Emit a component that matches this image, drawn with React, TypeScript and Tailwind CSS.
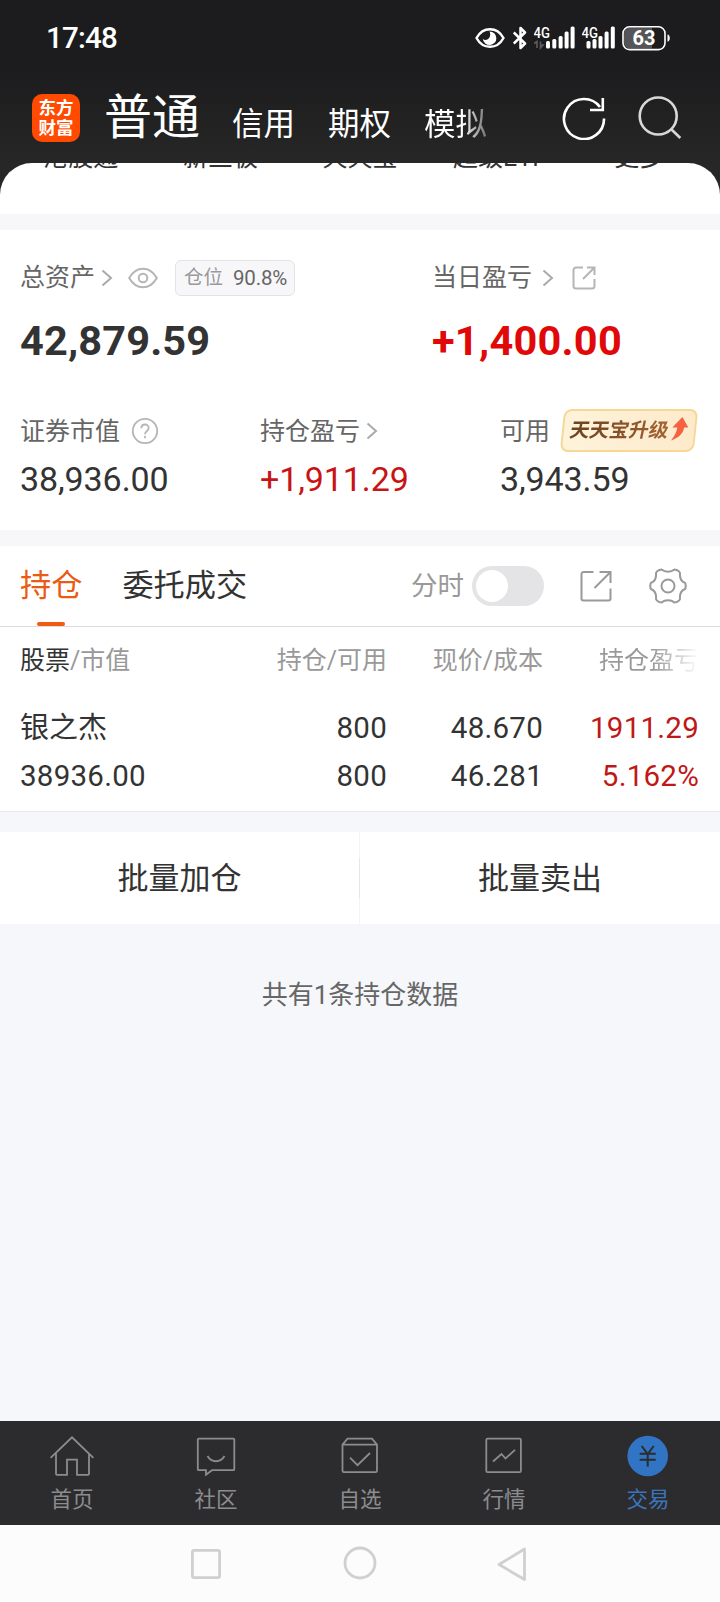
import { ReactNode } from "react";
import clsx from "clsx";

const shortcuts = ["港股通", "新三板", "天天宝", "超级ETF", "更多"];
const accountTabs = ["信用", "期权", "模拟"];

const EyeStatusIcon = () => (
  <svg className="w-[30px] h-[22px]" viewBox="0 0 30 22" fill="none">
    <path d="M1.500 11C5 4.600 9.600 2.200 15 2.200s10 2.400 13.500 8.800C25 17.400 20.400 19.800 15 19.800S5 17.400 1.500 11Z" stroke="#fff" strokeWidth="2.400" />
    <path d="M14.500 4.500a6.800 6.800 0 1 1-6.700 7.500c1.500 1.200 3.500 1.200 5 .2 2.600-1.700 3-5 1.700-7.700Z" fill="#fff" />
  </svg>
);

const BluetoothIcon = () => (
  <svg className="w-[14px] h-[24px]" viewBox="0 0 14 24" fill="none" stroke="#fff" strokeWidth="2.500" strokeLinejoin="round">
    <path d="M.8 6.500 12 17.500l-4.500 4.500V2L12 6.500.8 17.500" />
  </svg>
);

const SignalIcon = ({ bars, data }: { bars: number[]; data?: boolean }) => (
  <svg className="w-[42px] h-[24px]" viewBox="0 0 42 24">
    <text x="-.5" y="11.500" fill="#fff" fontSize="15" fontWeight="500" fontFamily="Roboto, sans-serif" textLength="16.500" lengthAdjust="spacingAndGlyphs">4G</text>
    {data && <path d="M0 17.500 3 15.500V22M6.500 15.500V22L9 19H6.500" stroke="#5c5c5e" strokeWidth="1.600" fill="none" />}
    {bars.map((x, i) => (
      <rect key={x} x={x} y={[15, 13, 10, 5.5, 0.5][i]} width="4" height={[7.500, 9.500, 12.500, 17, 22][i]} rx="1.500" fill="#fff" />
    ))}
  </svg>
);

const BatteryIcon = () => (
  <svg className="w-[50px] h-[26px]" viewBox="0 0 50 26">
    <path d="M9 2.500h22v21H9a6 6 0 0 1-6-6v-9a6 6 0 0 1 6-6Z" fill="#555557" />
    <rect x="2" y="1.800" width="42" height="22.800" rx="6.500" fill="none" stroke="#fff" strokeWidth="1.600" />
    <path d="M46.500 9.500c3 .2 3 7 0 7.200Z" fill="#fff" />
    <text x="23" y="20.200" textAnchor="middle" fill="#fff" fontSize="20" fontWeight="700" fontFamily="Roboto, sans-serif">63</text>
  </svg>
);

const Chevron = ({ className }: { className?: string }) => (
  <svg className={clsx("w-[12px] h-[18px] shrink-0", className)} viewBox="0 0 12 18" fill="none" stroke="#aaa" strokeWidth="2">
    <path d="M1.500 1.500 10 9l-8.500 7.500" />
  </svg>
);

const EyeIcon = () => (
  <svg className="w-[30px] h-[22px] shrink-0" viewBox="0 0 30 22" fill="none" stroke="#b5b5b5" strokeWidth="2">
    <path d="M1.200 11C5 4.300 9.800 1.700 15 1.700S25 4.300 28.800 11C25 17.700 20.200 20.300 15 20.300S5 17.700 1.200 11Z" />
    <circle cx="15" cy="11" r="4.300" />
  </svg>
);

const TradeIcon = () => (
  <svg className="w-[42px] h-[42px]" viewBox="0 0 42 42" fill="none">
    <circle cx="20.700" cy="21" r="20.300" fill="#3174c4" />
    <path d="m14.700 11 6 8 6-8M20.700 19v12.500M12.700 18.700h16M12.700 24.700h16" stroke="#2c2c2e" strokeWidth="2" />
  </svg>
);

const navItems: { label: string; icon: ReactNode; active?: boolean }[] = [
  {
    label: "首页",
    icon: <path d="M-.400 22.900 21 2.300l21.400 20.600M5 18.500V38.800a1 1 0 0 0 1 1h10V24.600h10v15.200h11a1 1 0 0 0 1-1V18.500" />,
  },
  {
    label: "社区",
    icon: <path d="M3.800 3.700h34.500a1 1 0 0 1 1 1v29.500a1 1 0 0 1-1 1H17l-6 4.500v-4.500H3.800a1 1 0 0 1-1-1V4.700a1 1 0 0 1 1-1ZM12.500 21c4 7 13 7 17 0" />,
  },
  {
    label: "自选",
    icon: <path d="M8.500 3.700h24.500l5 6v26a1.500 1.500 0 0 1-1.500 1.500H5a1.500 1.500 0 0 1-1.500-1.500v-26L8.500 3.700ZM3.500 9.700h34.500M11 22.700l7.500 7.500L31 18" />,
  },
  {
    label: "行情",
    icon: <path d="M4.500 3.700h32.200a1.200 1.200 0 0 1 1.200 1.200v31.100a1.200 1.200 0 0 1-1.200 1.200H4.500a1.200 1.200 0 0 1-1.200-1.200V4.900A1.200 1.200 0 0 1 4.500 3.700ZM10 26.500l8.500-7.500 4 4.500 9.500-8.700" />,
  },
  { label: "交易", icon: <TradeIcon />, active: true },
];

const Header = () => (
  <header className="h-[195px] shrink-0 bg-linear-to-b from-[#1c1c1e] from-35% to-[#272727] to-85% text-white">
    <div className="h-[76px] flex items-center justify-between pl-[46px] pr-[49px]">
      <span className="text-[29.500px] font-medium tracking-[-0.800px]">17:48</span>
      <div className="flex items-center">
        <EyeStatusIcon />
        <div className="w-[8px]" />
        <BluetoothIcon />
        <div className="w-[7px]" />
        <SignalIcon bars={[12, 18.300, 24.600, 30.600, 36.600]} data />
        <div className="w-[6px]" />
        <SignalIcon bars={[4.500, 10.500, 16.500, 22.600, 28.800]} />
        <div className="w-[50px] -ml-[3px]">
          <BatteryIcon />
        </div>
      </div>
    </div>
    <div className="h-[83px] flex items-center pl-8 pr-[38px]">
      <div className="size-[48px] rounded-[10px] bg-[#ff4a00] flex flex-col items-center justify-center text-[17.500px] leading-[20px] font-bold">
        <span>东方</span>
        <span>财富</span>
      </div>
      <div className="ml-6 h-[60px] flex items-center text-[48px] leading-none">普通</div>
      <div className="ml-8 mt-[15px] flex gap-8 text-[31.500px] leading-none">
        {accountTabs.map((tab) => (
          <span
            key={tab}
            className={clsx("w-16", tab === "模拟" && "bg-linear-to-r from-white from-60% to-[#6b6b6b] bg-clip-text text-transparent")}
          >
            {tab}
          </span>
        ))}
      </div>
      <div className="flex-1" />
      <svg className="w-[44px] h-[44px]" viewBox="0 0 44 44" fill="none" stroke="#fff" strokeWidth="2.600">
        <path d="M42 22.500A20 20 0 1 1 38 11M28 14h12.800V2" />
      </svg>
      <svg className="ml-8 w-[44px] h-[44px]" viewBox="0 0 44 44" fill="none" stroke="#d8d8d8" strokeWidth="2.600">
        <circle cx="20.200" cy="20" r="18.500" />
        <path d="m33 33 9.300 9" />
      </svg>
    </div>
  </header>
);

const Assets = () => (
  <section className="h-[300px] shrink-0 bg-white pl-[20px] text-[#666] text-[25px]">
    <div className="flex pt-[29px]">
      <div className="w-[412px]">
        <div className="h-[38px] flex items-center">
          <span className="leading-none -mt-px">总资产</span>
          <Chevron className="ml-[6px]" />
          <div className="w-[15px]" />
          <EyeIcon />
          <div className="ml-[17px] h-[36px] w-[120px] rounded-[6px] border border-[#e3e3e5] bg-[#f7f7f9] flex items-center pl-2 text-[19.500px] leading-none">
            <span className="text-[#999]">仓位</span>
            <span className="ml-[10px] text-[20.500px] tracking-[-0.200px]">90.8%</span>
          </div>
        </div>
        <div className="mt-[19px] h-[50px] text-[41.500px] leading-[50px] font-bold tracking-[0.150px] text-[#333]">42,879.59</div>
      </div>
      <div>
        <div className="h-[38px] flex items-center">
          <span className="leading-none -mt-px">当日盈亏</span>
          <Chevron className="ml-[10px]" />
          <svg className="ml-[18px] w-[24px] h-[24px]" viewBox="0 0 24 24" fill="none" stroke="#b5b5b5" strokeWidth="2">
            <path d="M11 1.500H4A2.500 2.500 0 0 0 1.500 4v16A2.500 2.500 0 0 0 4 22.500h16a2.500 2.500 0 0 0 2.500-2.500v-7M15 1.500h7.500V9M22 2 11 13" />
          </svg>
        </div>
        <div className="mt-[19px] h-[50px] text-[41.500px] leading-[50px] font-bold text-[#e00808] tracking-[0.250px]">+1,400.00</div>
      </div>
    </div>
    <div className="mt-[43px] flex">
      <div className="w-[240px]">
        <div className="h-[44px] flex items-center">
          <span className="leading-none">证券市值</span>
          <svg className="ml-[11px] w-[28px] h-[28px]" viewBox="0 0 28 28" fill="none" stroke="#b5b5b5" strokeWidth="1.800">
            <circle cx="14" cy="14" r="12.200" />
            <path d="M10.300 11.300c0-5 7.400-5 7.400-.3 0 3-3.700 3-3.700 6.200M14 18.800v2.400" />
          </svg>
        </div>
        <div className="mt-[6px] text-[34px] leading-[40px] tracking-[-0.100px] text-[#333]">38,936.00</div>
      </div>
      <div className="w-[240px]">
        <div className="h-[44px] flex items-center">
          <span className="leading-none">持仓盈亏</span>
          <Chevron className="ml-[6px]" />
        </div>
        <div className="mt-[6px] text-[34px] leading-[40px] tracking-[-0.100px] text-[#c81414]">+1,911.29</div>
      </div>
      <div>
        <div className="h-[44px] flex items-center">
          <span className="leading-none">可用</span>
          <div className="ml-[12px] -mt-px w-[134px] h-[43px] -skew-x-6 rounded-[8px] border-2 border-[#f6d795] bg-linear-to-r from-[#fef3da] to-[#fdeacb] flex items-center pl-[6px]">
            <span className="-skew-x-6 bg-linear-to-r from-[#6b4220] to-[#a36232] bg-clip-text text-transparent text-[19.700px] font-bold leading-[26px]">天天宝升级</span>
            <svg className="ml-[3px] w-[17px] h-[24px] -mt-[3px]" viewBox="0 0 17 24">
              <path d="M10 0 17 10.500h-4.200C12.500 17 8 21 1 23.500 4 19 6 15 6 10.500H1Z" fill="#f4623f" />
            </svg>
          </div>
        </div>
        <div className="mt-[6px] text-[34px] leading-[40px] tracking-[-0.100px] text-[#333]">3,943.59</div>
      </div>
    </div>
  </section>
);

const Holdings = () => (
  <section className="shrink-0 bg-white text-[#333]">
    <div className="h-[81px] border-b border-[#dcdcdc] flex items-center pl-[20px] pr-[33px] text-[31.200px] leading-none">
      <div className="relative h-full flex items-center text-[#ea5b14]">
        持仓
        <div className="absolute left-[17px] bottom-0 w-[28px] h-1 rounded-full bg-[#f05a14]" />
      </div>
      <span className="ml-[40px]">委托成交</span>
      <div className="flex-1" />
      <span className="text-[26.500px] text-[#999]">分时</span>
      <div className="ml-[8px] w-[72px] h-[40px] rounded-full bg-[#e4e4e6] p-1">
        <div className="size-8 rounded-full bg-white" />
      </div>
      <svg className="ml-[36px] w-[32px] h-[32px]" viewBox="0 0 32 32" fill="none" stroke="#999" strokeWidth="2">
        <path d="M13.500 2H3.500a2 2 0 0 0-2 2v24.500a2 2 0 0 0 2 2h25a2 2 0 0 0 2-2V18.500M19.500 2h11v11M30.500 2 14.500 18" />
      </svg>
      <svg className="ml-[37px] w-[38px] h-[38px]" viewBox="0 0 38 38" fill="none" stroke="#999" strokeWidth="2">
        <circle cx="19" cy="19" r="6.500" />
        <path d="M12.500 2.500c3.500 3 9.500 3 13 0 3.500.5 5 2 5.500 3.500-.5 5 1 8.500 5.200 10 .7 2 .7 4 0 6-4.200 1.500-5.700 5-5.200 10-.5 1.500-2 3-5.500 3.500-3.500-3-9.500-3-13 0-3.500-.5-5-2-5.500-3.500.5-5-1-8.500-5.200-10-.7-2-.7-4 0-6 4.200-1.500 5.700-5 5.200-10 .5-1.500 2-3 5.500-3.500Z" strokeLinejoin="round" />
      </svg>
    </div>
    <div className="h-[185px] border-b border-[#e8e8ea] pl-[20px] pr-[21px]">
      <div className="h-[66px] grid grid-cols-[209px_158px_156px_156px] items-center text-[25px] leading-none text-[#999]">
        <span>
          <span className="text-[#333]">股票</span>/市值
        </span>
        <span className="text-right">持仓/可用</span>
        <span className="text-right">现价/成本</span>
        <span className="text-right bg-linear-to-r from-[#999] from-70% to-white bg-clip-text text-transparent">持仓盈亏</span>
      </div>
      <div className="mt-[11px] grid grid-cols-[209px_158px_156px_156px] items-center text-[29.500px] leading-[48px] tracking-[0.250px]">
        <span className="text-[29px] tracking-normal">银之杰</span>
        <span className="text-right">800</span>
        <span className="text-right">48.670</span>
        <span className="text-right text-[#c01818]">1911.29</span>
        <span>38936.00</span>
        <span className="text-right">800</span>
        <span className="text-right">46.281</span>
        <span className="text-right text-[#c01818]">5.162%</span>
      </div>
    </div>
  </section>
);

const BottomNav = () => (
  <nav className="h-[104px] shrink-0 bg-[#2c2c2e] grid grid-cols-5 text-[21.500px] leading-none">
    {navItems.map(({ label, icon, active }) => (
      <div key={label} className={clsx("flex flex-col items-center pt-[14px]", active ? "text-[#3a76bf]" : "text-[#8c8c8e]")}>
        {active ? (
          icon
        ) : (
          <svg className="w-[42px] h-[42px] overflow-visible" viewBox="0 0 42 42" fill="none" stroke="currentColor" strokeWidth="1.800">
            {icon}
          </svg>
        )}
        <span className="mt-[12px]">{label}</span>
      </div>
    ))}
  </nav>
);

export default function App() {
  return (
    <div className="w-[720px] h-[1602px] overflow-hidden flex flex-col bg-[#f6f7fa] font-[Roboto,'Noto_Sans_CJK_SC',sans-serif]">
      <Header />
      <div className="-mt-8 h-[51px] shrink-0 rounded-t-[32px] bg-white overflow-hidden">
        <div className="-mt-[18px] px-[11px] grid grid-cols-5 text-center text-[25px] leading-[26px] text-[#333]">
          {shortcuts.map((name) => (
            <span key={name}>{name}</span>
          ))}
        </div>
      </div>
      <div className="h-4 shrink-0 bg-[#f7f7f9]" />
      <Assets />
      <div className="h-4 shrink-0 bg-[#f7f7f9]" />
      <Holdings />
      <div className="mt-[20px] h-[92px] shrink-0 bg-white flex items-center text-[31px] leading-none text-[#333]">
        <span className="w-[359px] text-center">批量加仓</span>
        <div className="w-px h-full bg-[#f4f4f6] flex items-center">
          <div className="w-px h-10 bg-[#e6e6e8]" />
        </div>
        <span className="flex-1 text-center">批量卖出</span>
      </div>
      <p className="mt-[58px] text-center text-[26px] leading-[26px] text-[#666]">共有1条持仓数据</p>
      <div className="flex-1" />
      <BottomNav />
      <div className="h-[77px] shrink-0 bg-[#fcfcfc] flex items-center justify-center">
        <svg className="w-[336px] h-[36px] overflow-visible" viewBox="0 0 336 36" fill="none" stroke="#d0d0d0" strokeWidth="2.800" strokeLinejoin="round">
          <rect x="0.400" y="4.400" width="27.200" height="27.200" rx="1.500" />
          <circle cx="168" cy="17" r="15" />
          <path d="M332.500 3v30.500L307 18.500Z" />
        </svg>
      </div>
    </div>
  );
}
